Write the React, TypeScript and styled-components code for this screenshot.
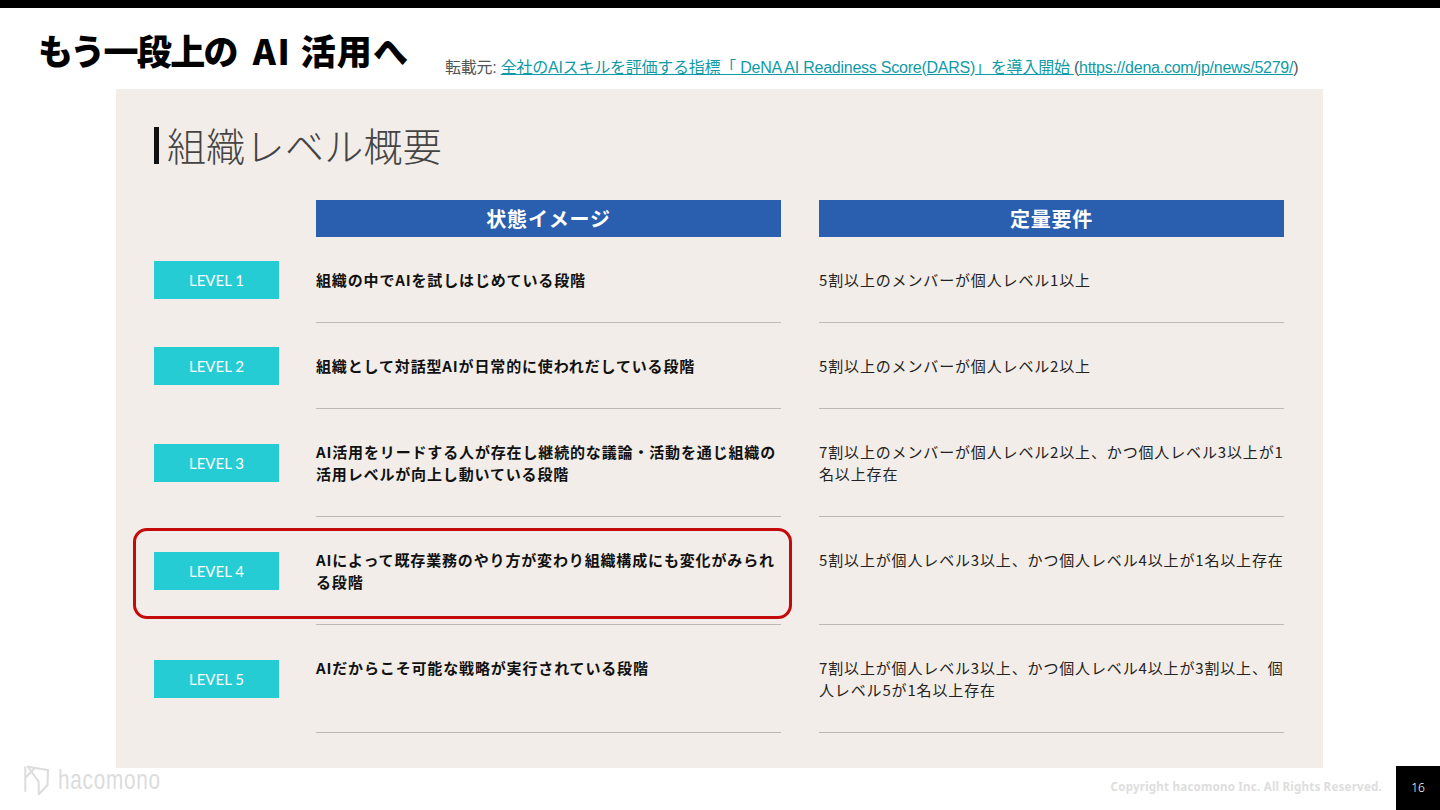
import styled, { createGlobalStyle } from 'styled-components'

type LevelRow = {
  label: string
  state: string
  requirement: string
  height: number
  badgeTop: number
  highlighted?: boolean
}

const rows: LevelRow[] = [
  {
    label: 'LEVEL 1',
    state: '組織の中でAIを試しはじめている段階',
    requirement: '5割以上のメンバーが個人レベル1以上',
    height: 86,
    badgeTop: 24,
  },
  {
    label: 'LEVEL 2',
    state: '組織として対話型AIが日常的に使われだしている段階',
    requirement: '5割以上のメンバーが個人レベル2以上',
    height: 86,
    badgeTop: 24,
  },
  {
    label: 'LEVEL 3',
    state: 'AI活用をリードする人が存在し継続的な議論・活動を通じ組織の活用レベルが向上し動いている段階',
    requirement: '7割以上のメンバーが個人レベル2以上、かつ個人レベル3以上が1名以上存在',
    height: 108,
    badgeTop: 35,
  },
  {
    label: 'LEVEL 4',
    state: 'AIによって既存業務のやり方が変わり組織構成にも変化がみられる段階',
    requirement: '5割以上が個人レベル3以上、かつ個人レベル4以上が1名以上存在',
    height: 108,
    badgeTop: 35,
    highlighted: true,
  },
  {
    label: 'LEVEL 5',
    state: 'AIだからこそ可能な戦略が実行されている段階',
    requirement: '7割以上が個人レベル3以上、かつ個人レベル4以上が3割以上、個人レベル5が1名以上存在',
    height: 108,
    badgeTop: 35,
  },
]

const GlobalStyle = createGlobalStyle`
  html, body {
    margin: 0;
    padding: 0;
    background: #fff;
    overflow: hidden;
  }
`

const Slide = styled.div`
  width: 1440px;
  height: 810px;
  display: flex;
  flex-direction: column;
  border-top: 8px solid #000;
  box-sizing: border-box;
  font-family: 'Noto Sans CJK JP', 'Noto Sans', sans-serif;
`

const TitleRow = styled.header`
  height: 81px;
  flex: none;
  padding-left: 38px;
  display: flex;
  align-items: flex-start;
`

const Title = styled.h1`
  margin: 18px 0 0;
  width: 371px;
  font-size: 35px;
  line-height: 48px;
  font-weight: 900;
  color: #000;
  white-space: pre;
`

const TitlePart = styled.span<{ $spacing: number }>`
  letter-spacing: ${(p) => p.$spacing}px;
`

const Source = styled.p`
  margin: 48px 0 0 36px;
  font-family: 'Liberation Sans', 'Noto Sans CJK JP', sans-serif;
  font-size: 16px;
  line-height: 24px;
  letter-spacing: -0.24px;
  color: #555;
  white-space: pre;
`

const SourceLink = styled.a`
  color: #0f9aa8;
  text-decoration: underline;
`

const Panel = styled.main`
  width: 1207px;
  height: 679px;
  flex: none;
  margin-left: 116px;
  padding: 38px 39px 0 38px;
  box-sizing: border-box;
  background: #f2ede8;
`

const PanelHeading = styled.h2`
  margin: 0 0 36px;
  height: 37px;
  box-sizing: border-box;
  display: flex;
  align-items: center;
  border-left: 5px solid #111;
  padding: 0 0 2px 8px;
  font-size: 39px;
  line-height: 35px;
  font-weight: 200;
  letter-spacing: 0.3px;
  color: #444;
`

const Columns = styled.div`
  display: grid;
  grid-template-columns: 162px 503px 465px;
`

const ColumnHead = styled.div`
  width: 465px;
  height: 37px;
  background: #2a5fb0;
  color: #fff;
  font-size: 20px;
  line-height: 37px;
  font-weight: 700;
  text-align: center;
  letter-spacing: 0.8px;
`

const Row = styled.section<{ $height: number }>`
  position: relative;
  display: grid;
  grid-template-columns: 162px 503px 465px;
  height: ${(p) => p.$height}px;
`

const Badge = styled.div<{ $top: number }>`
  width: 125px;
  height: 38px;
  margin-top: ${(p) => p.$top}px;
  background: #26ccd4;
  color: #fff;
  font-family: 'Lato', 'Noto Sans', sans-serif;
  font-size: 15px;
  line-height: 38px;
  text-align: center;
`

const Cell = styled.div<{ $strong?: boolean }>`
  width: 465px;
  box-sizing: border-box;
  padding-top: 31.5px;
  border-bottom: 1px solid #bdbab6;
  font-size: 15px;
  line-height: 22.5px;
  letter-spacing: 0.85px;
  font-weight: ${(p) => (p.$strong ? 700 : 400)};
  color: ${(p) => (p.$strong ? '#111' : '#222')};
`

const Highlight = styled.div`
  position: absolute;
  left: -21px;
  top: 11px;
  width: 659px;
  height: 91px;
  box-sizing: border-box;
  border: 3px solid #c40a0a;
  border-radius: 14px;
`

const Footer = styled.footer`
  flex: 1;
  display: flex;
  align-items: flex-start;
  padding-left: 24px;
`

const Logo = styled.div`
  display: flex;
  align-items: flex-start;
  gap: 9px;
  margin-top: -3px;
  color: #dcdcdc;
`

const LogoWord = styled.span`
  font-family: 'Liberation Sans', sans-serif;
  font-size: 28px;
  line-height: 30px;
  letter-spacing: 1px;
  transform: scaleX(0.74);
  transform-origin: left center;
`

const Copyright = styled.span`
  margin: 10px 14px 0 auto;
  font-family: 'Noto Sans', sans-serif;
  font-size: 11.6px;
  line-height: 18px;
  font-weight: 700;
  letter-spacing: 0.2px;
  color: #dedede;
`

const PageNumber = styled.div`
  width: 44px;
  height: 44px;
  margin-top: -2px;
  background: #000;
  color: #fff;
  font-family: 'Noto Sans', sans-serif;
  font-size: 12px;
  font-weight: 300;
  line-height: 44px;
  text-align: center;
`

const LogoMark = () => (
  <svg width="25" height="30" viewBox="0 0 25 30" fill="none" stroke="currentColor" strokeWidth="2">
    <path d="M1.3 1.5V26.7M1.3 13L10.7 3M3 1.5L24 5L23.5 20L14.7 29.5V16.7L4 2" />
  </svg>
)

const App = () => (
  <>
    <GlobalStyle />
    <Slide>
      <TitleRow>
        <Title>
          <TitlePart $spacing={-1.7}>もう一段上の</TitlePart>
          <TitlePart $spacing={0}>{'  '}</TitlePart>
          <TitlePart $spacing={1.5}>{'AI '}</TitlePart>
          <TitlePart $spacing={1.2}>活用へ</TitlePart>
        </Title>
        <Source>
          {'転載元: '}
          <SourceLink href="#">全社のAIスキルを評価する指標「 DeNA AI Readiness Score(DARS)」を導入開始 </SourceLink>
          {'('}
          <SourceLink href="#">https://dena.com/jp/news/5279/</SourceLink>
          {')'}
        </Source>
      </TitleRow>
      <Panel>
        <PanelHeading>組織レベル概要</PanelHeading>
        <Columns>
          <span />
          <ColumnHead>状態イメージ</ColumnHead>
          <ColumnHead>定量要件</ColumnHead>
        </Columns>
        {rows.map((row) => (
          <Row key={row.label} $height={row.height}>
            <Badge $top={row.badgeTop}>{row.label}</Badge>
            <Cell $strong>{row.state}</Cell>
            <Cell>{row.requirement}</Cell>
            {row.highlighted && <Highlight />}
          </Row>
        ))}
      </Panel>
      <Footer>
        <Logo>
          <LogoMark />
          <LogoWord>hacomono</LogoWord>
        </Logo>
        <Copyright>Copyright hacomono Inc. All Rights Reserved.</Copyright>
        <PageNumber>16</PageNumber>
      </Footer>
    </Slide>
  </>
)

export default App
